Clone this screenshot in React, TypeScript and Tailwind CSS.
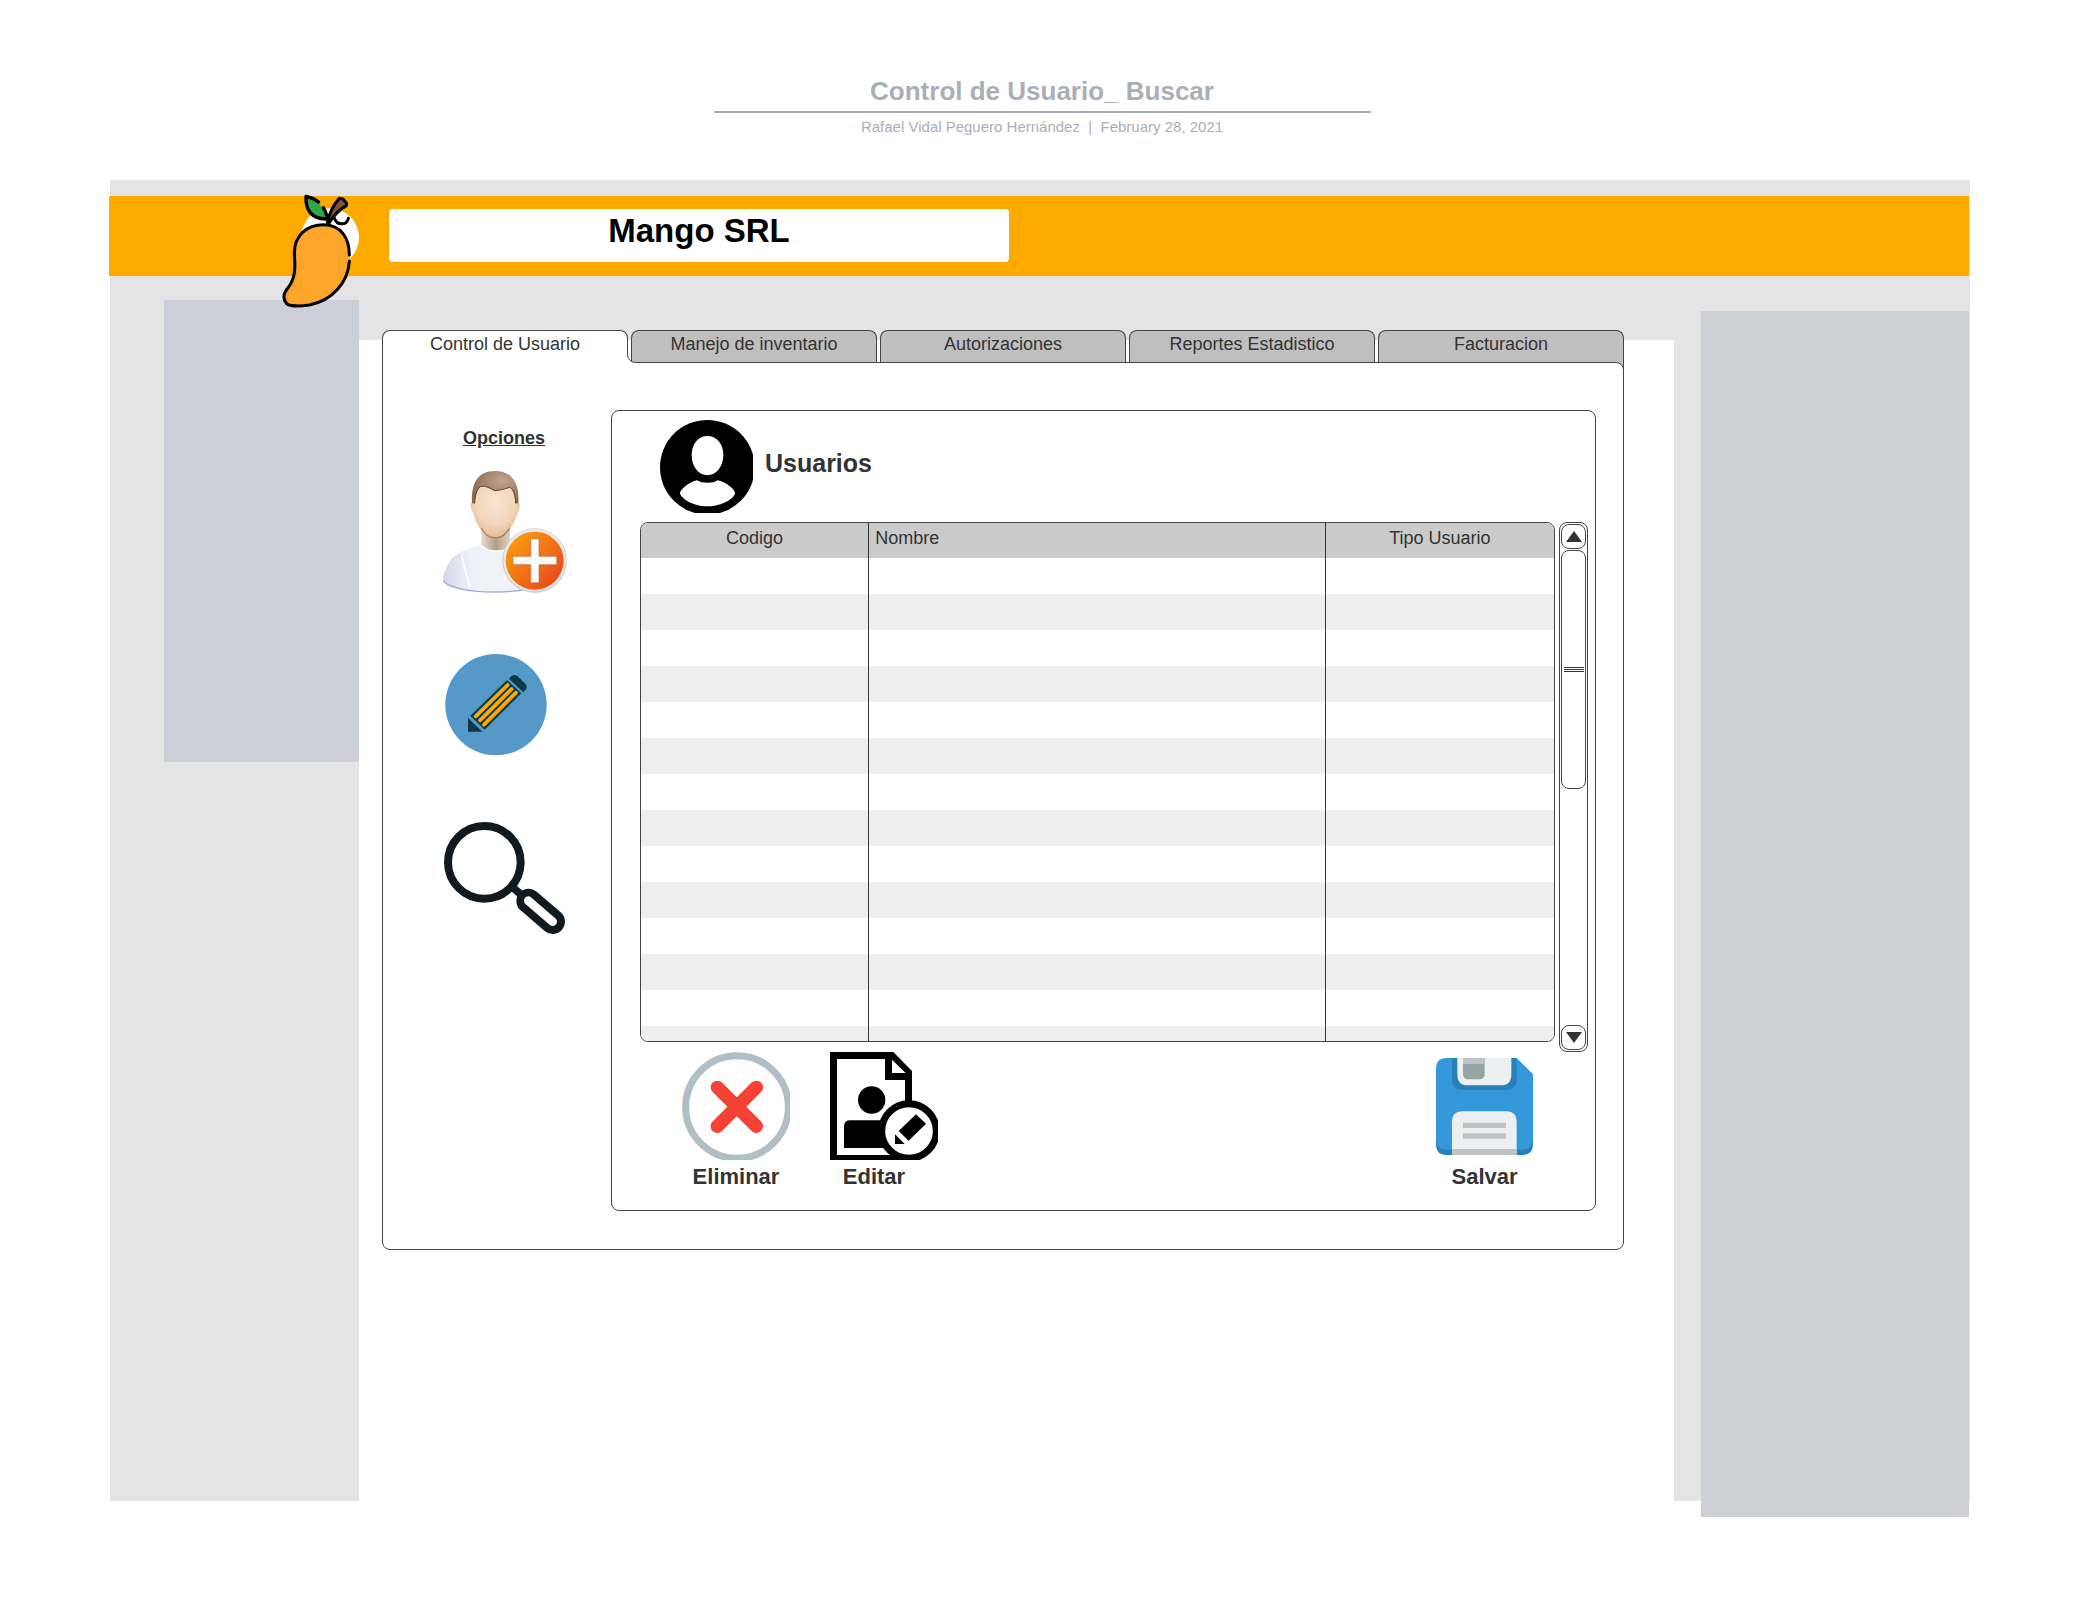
import React from "react";

const tabs = [
  "Manejo de inventario",
  "Autorizaciones",
  "Reportes Estadistico",
  "Facturacion",
];

const rows = Array.from({ length: 14 }, (_, i) => i);

function MangoLogo() {
  return (
    <svg viewBox="0 0 300 390" className="h-[130px] w-[100px]" aria-hidden="true">
      <circle cx="180" cy="157" r="87" fill="#fff" />
      <path
        d="M160 119 C112 119 73 150 73 204 C76 250 77 275 56 306 C38 328 38 345 50 357 C62 366 100 362 118 360 C190 346 236 286 239 215 C240 165 212 119 160 119Z"
        fill="#fda62b"
      />
      <path
        d="M78 180 C76 240 88 270 62 306 C50 325 48 340 54 356"
        fill="none"
        stroke="#f99a1c"
        strokeWidth="6"
      />
      <path
        d="M238 210 C238 160 214 119 160 119 C112 119 73 150 73 204 C76 250 77 275 56 306 C38 326 38 342 50 356 C58 364 90 364 118 360 C190 346 234 290 238 229"
        fill="none"
        stroke="#000"
        strokeWidth="9"
        strokeLinecap="round"
        strokeLinejoin="round"
      />
      <path d="M108 34 C106 70 124 100 168 102 C164 78 152 48 108 34Z" fill="#2fa843" />
      <path
        d="M146 51 C136 43 122 37 108 34 C106 74 124 102 168 102 M160 68 C165 76 168 84 171 94"
        fill="none"
        stroke="#000"
        strokeWidth="10"
        strokeLinecap="round"
        strokeLinejoin="round"
      />
      <path
        d="M172 113 C178 84 192 58 208 40 L219 42 L230 55 L229 62 C208 74 190 92 176 116Z"
        fill="#7d5238"
        stroke="#000"
        strokeWidth="9"
        strokeLinejoin="round"
      />
      <path
        d="M193 99 C200 122 232 122 235 100"
        fill="none"
        stroke="#000"
        strokeWidth="9"
        strokeLinecap="round"
      />
    </svg>
  );
}

function AddUserIcon() {
  return (
    <svg viewBox="24 30 372 372" className="block h-[124px] w-[124px]" aria-hidden="true">
      <defs>
        <radialGradient id="hair" cx="0.65" cy="0.3" r="0.7">
          <stop offset="0" stopColor="#c4a58e" />
          <stop offset="1" stopColor="#8a674f" />
        </radialGradient>
        <radialGradient id="face" cx="0.5" cy="0.4" r="0.65">
          <stop offset="0" stopColor="#f7e5d4" />
          <stop offset="0.6" stopColor="#f3d6ba" />
          <stop offset="1" stopColor="#e2b58a" />
        </radialGradient>
        <linearGradient id="neck" x1="0" x2="1" y1="0" y2="0">
          <stop offset="0" stopColor="#e8dccd" />
          <stop offset="0.5" stopColor="#b59c83" />
          <stop offset="1" stopColor="#e0d2c1" />
        </linearGradient>
        <linearGradient id="shirt" x1="0" x2="1" y1="0" y2="0">
          <stop offset="0" stopColor="#d2d6e8" />
          <stop offset="0.3" stopColor="#eff1f8" />
          <stop offset="1" stopColor="#f3f4fa" />
        </linearGradient>
        <linearGradient id="plus" x1="0.1" x2="0.9" y1="0.1" y2="0.9">
          <stop offset="0" stopColor="#fb9a0a" />
          <stop offset="0.5" stopColor="#f27415" />
          <stop offset="1" stopColor="#e5481b" />
        </linearGradient>
      </defs>
      <path
        d="M139 253 C105 266 72 275 55 292 C38 314 26 345 24 364 C50 390 120 398 184 397 C230 397 270 392 300 380 L290 275 L225 256Z"
        fill="url(#shirt)"
      />
      <path
        d="M24 363 C50 388 120 396 184 396 C230 396 260 392 290 384"
        fill="none"
        stroke="#a4acd0"
        strokeWidth="4"
      />
      <path d="M80 286 C88 320 93 350 106 381" fill="none" stroke="#fff" strokeWidth="5" />
      <path d="M55 292 C38 314 26 345 24 364" fill="none" stroke="#c1c6df" strokeWidth="2" />
      <path d="M139 190 H225 V262 C200 276 160 276 139 256Z" fill="url(#neck)" />
      <path d="M136 254 C156 278 204 280 228 260" fill="none" stroke="#fff" strokeWidth="4" />
      <path
        d="M112 125 C104 126 105 146 116 161 C122 190 136 208 150 224 C162 236 198 236 210 224 C226 207 240 186 247 161 C256 146 257 127 249 125 C250 60 220 50 180 50 C140 50 112 60 112 125Z"
        fill="url(#face)"
      />
      <path
        d="M139 204 C152 226 160 233 180 233 C200 233 210 226 224 204"
        fill="none"
        stroke="#8b7355"
        strokeWidth="4"
        opacity="0.75"
      />
      <path
        d="M111 130 C108 70 128 33 180 33 C232 33 254 70 250 130 L242 131 C241 105 236 88 224 82 C206 88 194 91 180 92 C164 86 156 76 136 80 C124 90 120 110 119 131Z"
        fill="url(#hair)"
      />
      <path
        d="M119 130 C120 108 124 90 136 80 C156 76 164 86 180 92 C194 91 206 88 224 82 C236 88 241 105 242 130"
        fill="none"
        stroke="#62402b"
        strokeWidth="3"
      />
      <circle cx="299" cy="302" r="97" fill="#cfcfd2" />
      <circle cx="299" cy="300" r="94" fill="#e9e9ea" />
      <circle cx="299" cy="302" r="87" fill="url(#plus)" />
      <path
        d="M287 236 H312 V289 H365 V314 H312 V368 H287 V314 H234 V289 H287Z"
        fill="#fafafa"
        stroke="#c9703a"
        strokeWidth="2"
      />
    </svg>
  );
}

function PencilIcon() {
  return (
    <svg viewBox="219 102 372 306" className="block h-[102px] w-[124px]" aria-hidden="true">
      <circle cx="378" cy="254" r="152" fill="#5499c7" />
      <path d="M294 293 V335 H337Z" fill="#0b3a45" />
      <path d="M301 287 L411 180 L454 220 L344 329Z" fill="#0b3a45" />
      <path
        d="M317 289 L413 195 M330 301 L425 207 M342 314 L438 218"
        stroke="#ffab00"
        strokeWidth="11"
        strokeLinecap="round"
      />
      <path
        d="M417 176 L424 169 Q433 162 442 168 L466 191 Q473 200 468 208 L460 217Z"
        fill="#0b3a45"
      />
    </svg>
  );
}

function MagnifierIcon() {
  return (
    <svg viewBox="219 606 372 339" className="block h-[113px] w-[124px]" aria-hidden="true">
      <circle cx="343" cy="727" r="109" fill="none" stroke="#111a21" strokeWidth="24" />
      <path d="M422 797 L458 828" stroke="#111a21" strokeWidth="23" />
      <path d="M476 843 L548 905" stroke="#111a21" strokeWidth="74" strokeLinecap="round" />
      <path d="M475 842 L548 905" stroke="#fff" strokeWidth="26" strokeLinecap="round" />
    </svg>
  );
}

function AvatarIcon() {
  return (
    <svg viewBox="180 330 279 279" className="block h-[93px] w-[93px]" aria-hidden="true">
      <circle cx="322" cy="472" r="142" fill="#000" />
      <path
        d="M322 378 C351 378 370 402 370 436 C370 470 348 496 322 496 C296 496 275 470 275 436 C275 402 294 378 322 378Z"
        fill="#fff"
      />
      <path
        d="M291 511 C305 521 340 521 353 511 C378 516 405 538 405 550 C403 564 370 589 322 589 C275 589 243 564 240 550 C240 540 265 517 291 511Z"
        fill="#fff"
      />
    </svg>
  );
}

function DeleteIcon() {
  return (
    <svg viewBox="186 126 324 324" className="block h-[108px] w-[108px]" aria-hidden="true">
      <circle cx="351" cy="291" r="154" fill="#fff" stroke="#b0bec5" strokeWidth="21" />
      <path
        d="M292 232 L409 349 M409 232 L292 349"
        stroke="#f44336"
        strokeWidth="40"
        strokeLinecap="round"
      />
    </svg>
  );
}

function EditIcon() {
  return (
    <svg viewBox="630 126 324 324" className="block h-[108px] w-[108px]" aria-hidden="true">
      <path d="M630 126 H820 L876 183 V450 H630Z" fill="#000" />
      <path d="M651 147 H795 V210 H855 V435 H651Z" fill="#fff" />
      <path d="M816 149 V189 H857Z" fill="#fff" />
      <circle cx="755" cy="270" r="41" fill="#000" />
      <path d="M672 414 V347 Q674 331 690 331 H820 V414Z" fill="#000" />
      <circle cx="867" cy="363" r="82" fill="#fff" stroke="#000" strokeWidth="21" />
      <path d="M888 313 L918 341 L866 392 L836 363Z" fill="#000" />
      <path d="M825 373 V402 H854Z" fill="#000" />
    </svg>
  );
}

function SaveIcon() {
  return (
    <svg viewBox="168 234 291 291" className="block h-[97px] w-[97px]" aria-hidden="true">
      <path d="M168 300 H459 V493 Q459 525 427 525 H200 Q168 525 168 493Z" fill="#2980b9" />
      <path
        d="M200 234 H410 L459 283 V477 Q459 509 427 509 H200 Q168 509 168 477 V266 Q168 234 200 234Z"
        fill="#3498db"
      />
      <path d="M216 234 H410 V298 Q410 330 378 330 H248 Q216 330 216 298Z" fill="#2980b9" />
      <path d="M232 234 H394 V284 Q394 316 362 316 H264 Q232 316 232 284Z" fill="#ecf0f1" />
      <path d="M249 234 H314 V282 Q314 298 298 298 H265 Q249 298 249 282Z" fill="#95a5a6" />
      <path d="M249 234 H314 V252 H249Z" fill="#bdc3c7" />
      <path d="M216 525 V426 Q216 394 248 394 H378 Q410 394 410 426 V525Z" fill="#ecf0f1" />
      <path d="M216 507 H410 V525 H216Z M249 428 H378 V444 H249Z M249 460 H378 V476 H249Z" fill="#bdc3c7" />
    </svg>
  );
}

function ScrollBar() {
  return (
    <div className="flex h-[530px] w-[29px] shrink-0 flex-col gap-px rounded-lg border border-[#444] p-px">
      <button
        type="button"
        aria-label="Subir"
        className="flex h-[25px] items-center justify-center rounded-lg border border-[#444]"
      >
        <svg viewBox="0 0 16 11" className="h-[11px] w-4" aria-hidden="true">
          <path d="M8 0 L16 11 H0Z" fill="#333" />
        </svg>
      </button>
      <div className="flex h-[239px] flex-col items-center justify-center gap-px rounded-lg border border-[#444]">
        <span className="h-px w-5 bg-[#333]" />
        <span className="h-px w-5 bg-[#333]" />
        <span className="h-px w-5 bg-[#333]" />
      </div>
      <button
        type="button"
        aria-label="Bajar"
        className="mt-auto flex h-[25px] items-center justify-center rounded-lg border border-[#444]"
      >
        <svg viewBox="0 0 16 11" className="h-[11px] w-4" aria-hidden="true">
          <path d="M0 0 H16 L8 11Z" fill="#333" />
        </svg>
      </button>
    </div>
  );
}

function UsersTable() {
  return (
    <div className="h-[520px] min-w-0 flex-1 overflow-hidden rounded-lg border border-[#444]">
      <table className="w-full table-fixed border-separate border-spacing-0 text-lg">
        <thead>
          <tr className="h-[35px] bg-[#cbcbcb]">
            <th
              scope="col"
              className="w-1/4 border-r border-[#333] p-0 pb-[5px] text-center leading-[30px] font-normal"
            >
              Codigo
            </th>
            <th
              scope="col"
              className="w-1/2 border-r border-[#333] p-0 pb-[5px] pl-[6px] text-left leading-[30px] font-normal"
            >
              Nombre
            </th>
            <th scope="col" className="w-1/4 p-0 pb-[5px] text-center leading-[30px] font-normal">
              Tipo Usuario
            </th>
          </tr>
        </thead>
        <tbody>
          {rows.map((row) => (
            <tr key={row} className="h-9 even:bg-[#efefef]">
              <td className="border-r border-[#333] p-0" />
              <td className="border-r border-[#333] p-0" />
              <td className="p-0" />
            </tr>
          ))}
        </tbody>
      </table>
    </div>
  );
}

function ActionButton({
  label,
  labelClass = "",
  children,
}: {
  label: string;
  labelClass?: string;
  children: React.ReactNode;
}) {
  return (
    <button type="button" className="flex flex-col items-center gap-[5px]">
      <span className="flex h-[108px] items-center">{children}</span>
      <span className={`text-[22px] leading-6 font-bold ${labelClass}`}>{label}</span>
    </button>
  );
}

export default function App() {
  return (
    <div className="min-h-screen bg-white pb-[83px] font-['Liberation_Sans',Arial,sans-serif] text-[#333]">
      <header className="h-[180px] pt-[75px] pl-1 text-center text-[#a9afb8]">
        <h1 className="mx-auto max-w-[657px] border-b-2 border-[#a9adb8] pb-1 text-[26px] leading-8 font-bold">
          Control de Usuario_ Buscar
        </h1>
        <p className="mt-0.5 text-[15px] leading-6">
          Rafael Vidal Peguero Hernández&nbsp; |&nbsp; February 28, 2021
        </p>
      </header>

      <div className="mx-[110px] bg-[#e4e4e4] pt-4">
        <div className="relative mr-px -ml-px flex h-20 items-start bg-[#ffaa00] pt-[13px] pl-[280px]">
          <div className="absolute -top-[11px] left-[161px] z-10">
            <MangoLogo />
          </div>
          <h2 className="h-[53px] w-full max-w-[620px] rounded bg-white text-center text-[33px] leading-[44px] font-bold text-black">
            Mango SRL
          </h2>
        </div>

        <div className="flex min-h-[1225px] bg-white">
          <aside className="w-[249px] shrink-0 bg-[#e4e4e4] pt-6 pl-[54px]">
            <div className="h-[462px] bg-[#cdcfd8]" />
          </aside>

          <main className="min-w-0 flex-1 bg-[linear-gradient(#e4e4e4_64px,#ffffff_64px)] pt-[54px] pr-[50px] pl-[23px]">
            <div role="tablist" className="flex h-8 items-start gap-[3px] text-lg leading-[26px]">
              <button
                type="button"
                role="tab"
                aria-selected="true"
                className="relative z-20 flex h-[33px] flex-1 items-start justify-center rounded-t-lg border border-b-0 border-[#444] bg-white"
              >
                Control de Usuario
                <svg
                  viewBox="0 0 9 9"
                  className="absolute -right-[9px] bottom-0 h-[9px] w-[9px]"
                  aria-hidden="true"
                >
                  <path d="M0 0 H.5 A8 8 0 0 0 8.5 8.5 L9 9 H0Z" fill="#fff" />
                  <path d="M.5 0 V.5 A8 8 0 0 0 8.5 8.5 H9" fill="none" stroke="#444" />
                </svg>
              </button>
              {tabs.map((tab) => (
                <button
                  key={tab}
                  type="button"
                  role="tab"
                  aria-selected="false"
                  className="flex h-10 flex-1 items-start justify-center rounded-t-lg border border-b-0 border-[#444] bg-[#bfbfbf]"
                >
                  {tab}
                </button>
              ))}
            </div>

            <section className="relative z-10 flex rounded-b-lg rounded-tr-lg border border-[#444] bg-white pt-[47px] pr-[27px] pb-[38px]">
              <nav className="flex w-[228px] shrink-0 flex-col items-start pt-4 pl-[60px]">
                <h3 className="w-[122px] text-center text-lg leading-6 font-bold underline">
                  Opciones
                </h3>
                <button type="button" aria-label="Agregar usuario" className="mt-5">
                  <AddUserIcon />
                </button>
                <button type="button" aria-label="Editar usuario" className="mt-[60px]">
                  <PencilIcon />
                </button>
                <button type="button" aria-label="Buscar usuario" className="mt-[66px]">
                  <MagnifierIcon />
                </button>
              </nav>

              <div className="min-w-0 flex-1 rounded-lg border border-[#444] pt-[9px] pb-[21px]">
                <div className="flex items-center gap-3 pl-12">
                  <AvatarIcon />
                  <h2 className="pb-2 text-[25px] leading-8 font-bold">Usuarios</h2>
                </div>
                <div className="mt-[9px] flex items-start gap-1 pr-[7px] pl-7">
                  <UsersTable />
                  <ScrollBar />
                </div>
                <div className="flex gap-10 pr-[62px] pl-[70px]">
                  <ActionButton label="Eliminar">
                    <DeleteIcon />
                  </ActionButton>
                  <ActionButton label="Editar" labelClass="pr-5">
                    <EditIcon />
                  </ActionButton>
                  <div className="ml-auto">
                    <ActionButton label="Salvar">
                      <SaveIcon />
                    </ActionButton>
                  </div>
                </div>
              </div>
            </section>
          </main>

          <aside className="flex w-[296px] shrink-0 bg-[#e4e4e4] pt-[35px] pr-px pl-[27px]">
            <div className="-mb-4 flex-1 bg-[#cccfd4]" />
          </aside>
        </div>
      </div>
    </div>
  );
}
